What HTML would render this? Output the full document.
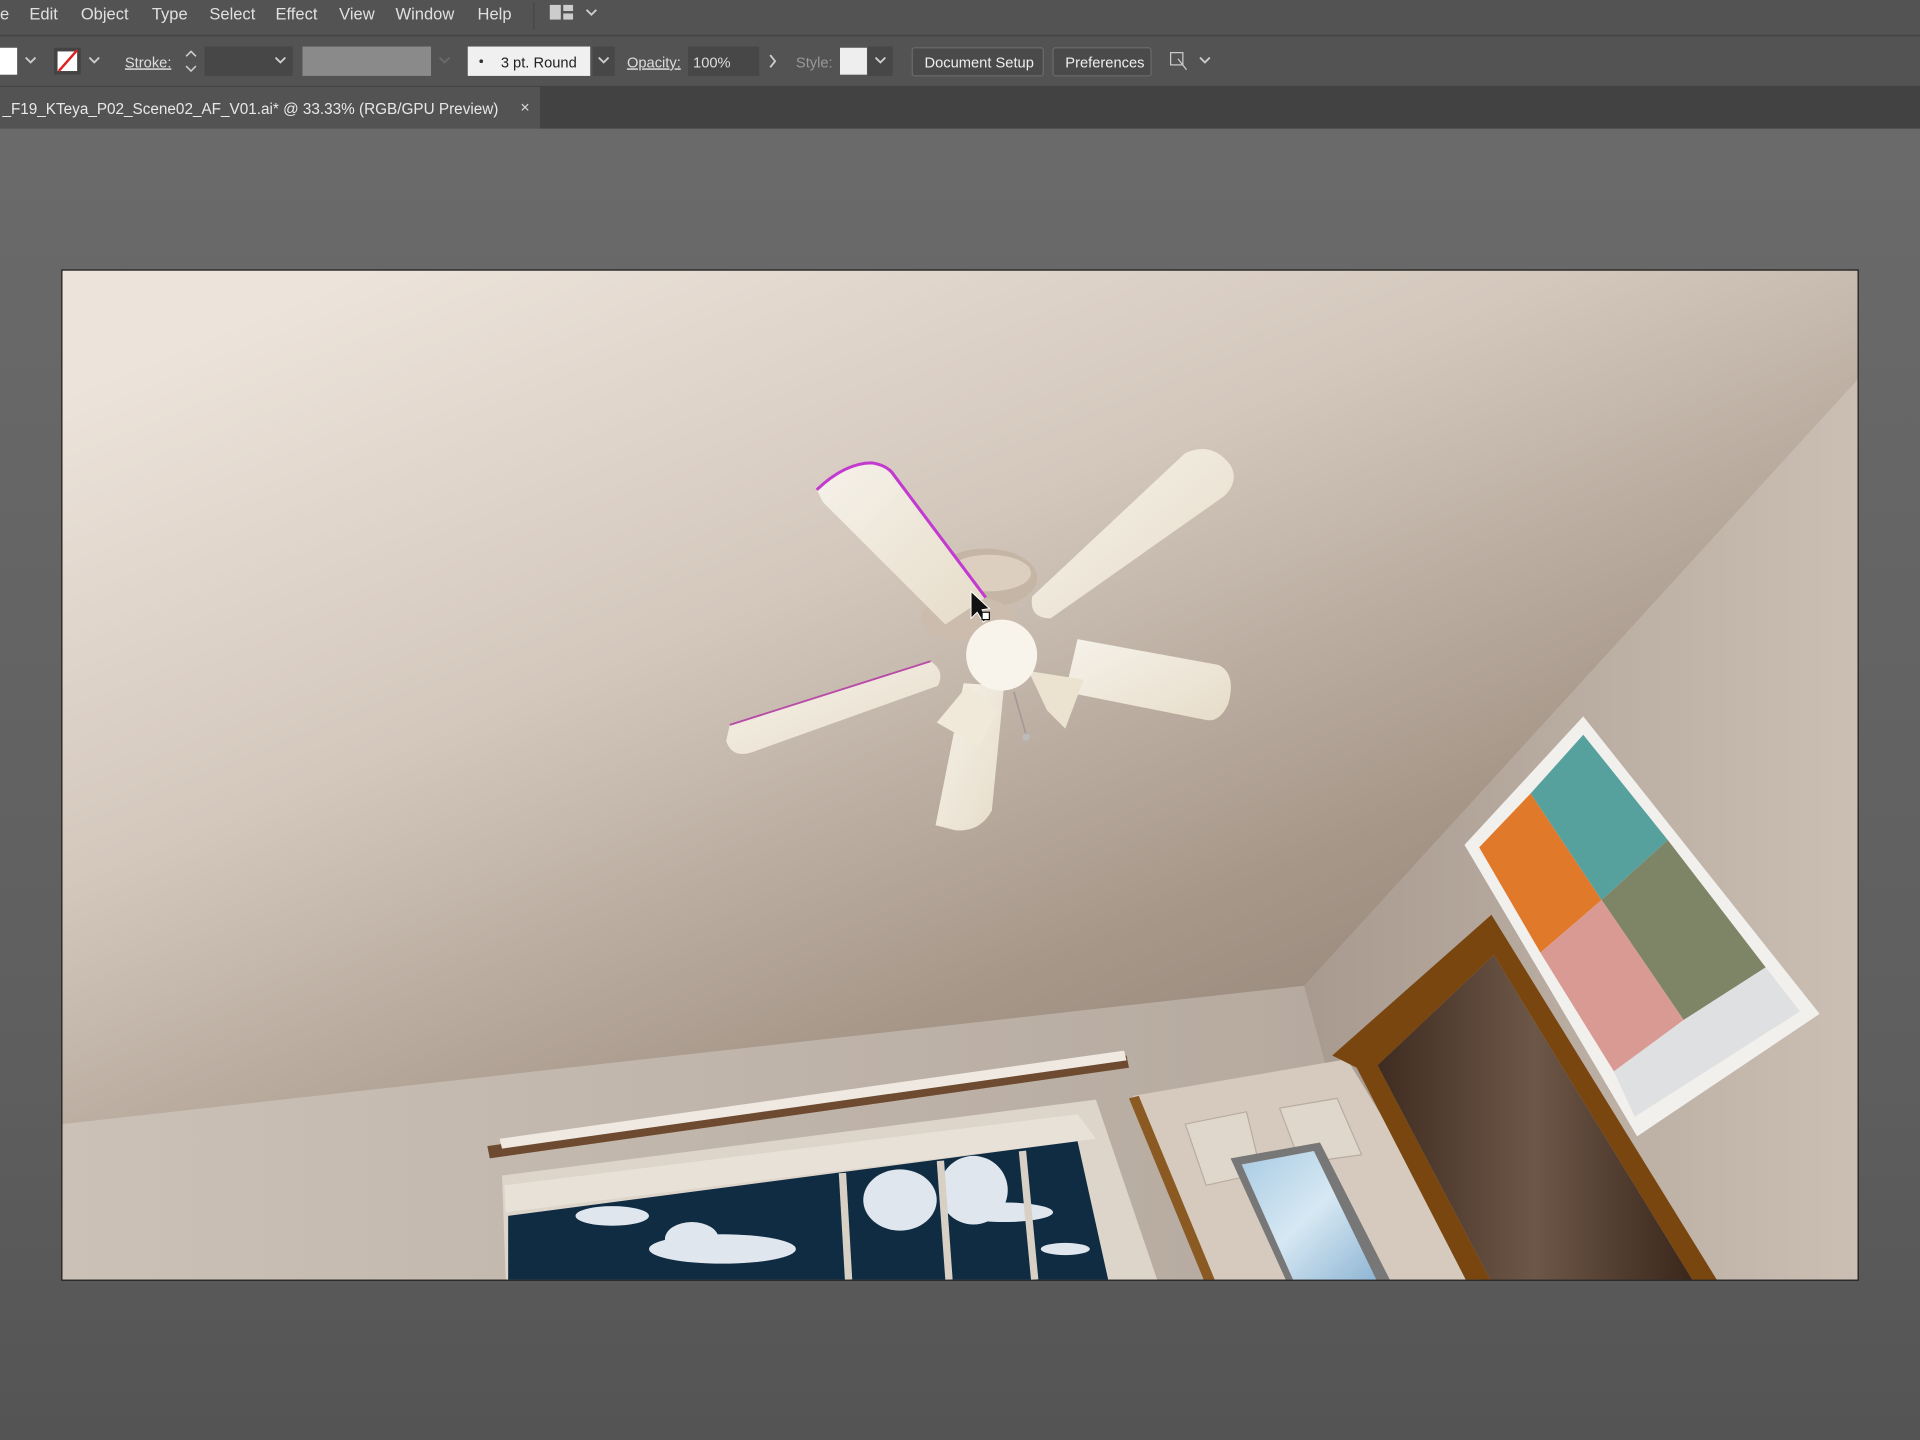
<!DOCTYPE html>
<html><head><meta charset="utf-8"><style>
html,body{margin:0;padding:0;background:#5a5a5a;overflow:hidden}
svg{display:block}
text{font-family:"Liberation Sans",sans-serif}
</style></head><body>
<svg width="1920" height="1440" viewBox="0 0 1568 1176" xmlns="http://www.w3.org/2000/svg">
<defs>
<linearGradient id="cv" x1="0" y1="0" x2="0" y2="1">
<stop offset="0" stop-color="#6c6c6c"/><stop offset="0.75" stop-color="#5e5e5e"/><stop offset="1" stop-color="#545454"/></linearGradient>
<linearGradient id="ceil" x1="0.1" y1="0.05" x2="0.75" y2="0.95">
<stop offset="0" stop-color="#ece3da"/><stop offset="0.35" stop-color="#d4c8bd"/><stop offset="0.7" stop-color="#a69789"/><stop offset="1" stop-color="#8a7b70"/></linearGradient>
<linearGradient id="rw" x1="0" y1="0" x2="1" y2="0">
<stop offset="0" stop-color="#a89a8f"/><stop offset="1" stop-color="#cbbfb4"/></linearGradient>
<linearGradient id="bw" x1="0" y1="0" x2="1" y2="0">
<stop offset="0" stop-color="#cbc1b7"/><stop offset="1" stop-color="#b5a99e"/></linearGradient>
<linearGradient id="dr" x1="0" y1="0" x2="1" y2="0">
<stop offset="0" stop-color="#3f2c20"/><stop offset="0.5" stop-color="#6d5748"/><stop offset="1" stop-color="#3a271b"/></linearGradient>
<linearGradient id="bl" x1="0" y1="0" x2="1" y2="1">
<stop offset="0" stop-color="#f6f2ea"/><stop offset="1" stop-color="#e6dcc9"/></linearGradient>
<linearGradient id="mir" x1="0" y1="0" x2="1" y2="1">
<stop offset="0" stop-color="#a9cbe3"/><stop offset="0.5" stop-color="#d6e8f3"/><stop offset="1" stop-color="#8fb6d4"/></linearGradient>
<clipPath id="ab"><rect x="51" y="221" width="1466" height="824"/></clipPath>
</defs>
<!-- chrome -->
<rect width="1568" height="1176" fill="url(#cv)"/>
<rect width="1568" height="28" fill="#535353"/>
<rect y="28" width="1568" height="42" fill="#535353"/>
<line x1="0" y1="29" x2="1568" y2="29" stroke="#444" stroke-width="1.5"/>
<rect y="70" width="1568" height="35" fill="#424242"/>
<rect y="71" width="441" height="34" fill="#535353"/>
<g fill="#e0e0e0" font-size="13.5">
<text x="0" y="16">e</text><text x="24" y="16">Edit</text><text x="66" y="16">Object</text><text x="124" y="16">Type</text><text x="171" y="16">Select</text><text x="225" y="16">Effect</text><text x="277" y="16">View</text><text x="323" y="16">Window</text><text x="390" y="16">Help</text>
</g>
<line x1="436" y1="2" x2="436" y2="24" stroke="#444"/>
<rect x="449" y="4" width="9" height="12" fill="#ccc"/><rect x="460" y="4" width="8" height="5" fill="#ccc"/><rect x="460" y="11" width="8" height="5" fill="#ccc"/>
<path d="M479 8l4 4 4-4" stroke="#ccc" fill="none" stroke-width="1.5"/>
<!-- toolbar -->
<rect x="0" y="39" width="14" height="22" fill="#fff"/>
<path d="M21 47l4 4 4-4" stroke="#ccc" fill="none" stroke-width="1.5"/>
<rect x="44" y="39" width="22" height="22" fill="#444"/><rect x="47" y="42" width="16" height="16" fill="#fff"/><line x1="48" y1="58" x2="63" y2="41" stroke="#e02020" stroke-width="2"/>
<path d="M73 47l4 4 4-4" stroke="#ccc" fill="none" stroke-width="1.5"/>
<text x="102" y="55" fill="#ddd" font-size="12" text-decoration="underline">Stroke:</text>
<path d="M152 46l4-4 4 4M152 54l4 4 4-4" stroke="#ccc" fill="none" stroke-width="1.3"/>
<rect x="167" y="38" width="72" height="24" fill="#474747"/>
<path d="M225 47l4 4 4-4" stroke="#ccc" fill="none" stroke-width="1.5"/>
<rect x="247" y="38" width="105" height="24" fill="#8a8a8a"/>
<path d="M359 47l4 4 4-4" stroke="#6a6a6a" fill="none" stroke-width="1.5"/>
<rect x="382" y="38" width="100" height="24" fill="#f0f0f0"/>
<circle cx="393" cy="50" r="1.5" fill="#333"/><text x="409" y="55" fill="#222" font-size="12">3 pt. Round</text>
<rect x="484" y="38" width="18" height="24" fill="#474747"/><path d="M489 47l4 4 4-4" stroke="#ccc" fill="none" stroke-width="1.5"/>
<text x="512" y="55" fill="#ddd" font-size="12" text-decoration="underline">Opacity:</text>
<rect x="562" y="38" width="58" height="24" fill="#474747"/><text x="566" y="55" fill="#ddd" font-size="12">100%</text>
<path d="M629 45l4 5-4 5" stroke="#ccc" fill="none" stroke-width="1.5"/>
<text x="650" y="55" fill="#999" font-size="12">Style:</text>
<rect x="686" y="39" width="22" height="22" fill="#eee"/><rect x="709" y="38" width="20" height="24" fill="#474747"/><path d="M715 47l4 4 4-4" stroke="#ccc" fill="none" stroke-width="1.5"/>
<rect x="745" y="39" width="107" height="23" fill="#4a4a4a" stroke="#6a6a6a" rx="2"/><text x="755" y="55" fill="#eee" font-size="12">Document Setup</text>
<rect x="860" y="39" width="80" height="23" fill="#4a4a4a" stroke="#6a6a6a" rx="2"/><text x="870" y="55" fill="#eee" font-size="12">Preferences</text>
<rect x="956" y="43" width="10" height="10" fill="none" stroke="#ccc"/><path d="M962 48l7 9" stroke="#ccc"/>
<path d="M980 47l4 4 4-4" stroke="#ccc" fill="none" stroke-width="1.5"/>
<text x="2" y="93" fill="#e8e8e8" font-size="12.5">_F19_KTeya_P02_Scene02_AF_V01.ai* @ 33.33% (RGB/GPU Preview)</text>
<text x="425" y="92" fill="#ddd" font-size="13">×</text>
<!-- artboard -->
<rect x="50" y="220" width="1468" height="826" fill="#222"/>
<g clip-path="url(#ab)">
<rect x="51" y="221" width="1466" height="824" fill="url(#ceil)"/>
<polygon points="51,918 1065,805 1110,870 1130,1045 51,1045" fill="url(#bw)"/>
<polygon points="1065,805 1517,310 1517,1045 1130,1045" fill="url(#rw)"/>
<!-- curtain rod -->
<polygon points="398,936 920,862 922,872 400,946" fill="#6d4a30"/>
<polygon points="408,930 918,858 920,866 410,938" fill="#efe9e2"/>
<!-- window -->
<polygon points="410,960 895,898 945,1045 413,1045" fill="#ddd4ca"/>
<polygon points="412,968 880,910 895,930 413,990" fill="#e8e1d8"/>
<polygon points="415,993 880,932 905,1045 415,1045" fill="#0f2c42"/>
<g fill="#dfe6ee">
<ellipse cx="590" cy="1020" rx="60" ry="12"/><ellipse cx="565" cy="1012" rx="22" ry="14"/><ellipse cx="500" cy="993" rx="30" ry="8"/>
<ellipse cx="735" cy="980" rx="30" ry="25"/><ellipse cx="795" cy="972" rx="28" ry="28"/><ellipse cx="820" cy="990" rx="40" ry="8"/><ellipse cx="870" cy="1020" rx="20" ry="5"/>
</g>
<g stroke="#d8cfc5" stroke-width="6"><line x1="688" y1="958" x2="693" y2="1045"/><line x1="768" y1="948" x2="775" y2="1045"/><line x1="835" y1="940" x2="845" y2="1045"/></g>
<!-- cabinet door -->
<polygon points="925,895 1100,865 1210,1045 985,1045" fill="#d5cabd"/>
<polygon points="922,897 930,895 992,1045 983,1045" fill="#8a5a22"/>
<polygon points="968,918 1018,908 1030,958 985,968" fill="#e0d7cc" stroke="#b8ad9f"/>
<polygon points="1045,905 1092,897 1112,943 1062,950" fill="#e0d7cc" stroke="#b8ad9f"/>
<polygon points="1005,946 1078,933 1135,1045 1050,1045" fill="#777"/>
<polygon points="1014,951 1073,940 1124,1045 1056,1045" fill="url(#mir)"/>
<!-- doorway -->
<polygon points="1088,862 1218,747 1402,1045 1382,1045 1220,780 1125,870 1217,1045 1197,1045 1108,872" fill="#7a4610"/>
<polygon points="1125,870 1220,780 1382,1045 1217,1045" fill="url(#dr)"/>
<!-- painting -->
<polygon points="1196,690 1293,585 1486,828 1337,928" fill="#f2f0ec"/>
<polygon points="1208,692 1250,648 1308,735 1258,778" fill="#e07a2a"/>
<polygon points="1250,648 1293,600 1362,686 1308,735" fill="#56a09d"/>
<polygon points="1308,735 1362,686 1442,790 1375,833" fill="#7e8566"/>
<polygon points="1258,778 1308,735 1375,833 1318,875" fill="#d99a94"/>
<polygon points="1318,875 1375,833 1442,790 1470,826 1335,912" fill="#dfe0e2"/>
<!-- fan -->
<ellipse cx="805" cy="472" rx="42" ry="24" fill="#c5b5a5"/>
<ellipse cx="808" cy="468" rx="34" ry="15" fill="#dccfc0"/>
<ellipse cx="790" cy="505" rx="38" ry="18" fill="#cbbcad"/>
<path d="M667 400 Q690 378 712 378 Q725 380 730 388 L805 488 L772 510 L672 410 Z" fill="url(#bl)"/>
<path d="M667 400 Q690 378 712 378 Q725 380 730 388 L805 488" fill="none" stroke="#c23ad0" stroke-width="2.5"/>
<path d="M843 487 L968 370 Q990 360 1005 380 Q1012 393 1000 405 L858 505 Q840 505 843 487 Z" fill="url(#bl)"/>
<path d="M596 592 L760 540 Q772 548 766 560 L615 614 Q598 620 593 605 Z" fill="url(#bl)"/>
<path d="M596 592 L760 540" fill="none" stroke="#b84aa8" stroke-width="1.5"/>
<path d="M880 522 L995 543 Q1010 550 1003 575 Q996 590 985 588 L870 565 Z" fill="url(#bl)"/>
<path d="M787 558 L820 560 L810 662 Q800 680 780 678 L764 674 Z" fill="url(#bl)"/>
<path d="M765 590 L790 560 L815 580 L800 610 Z" fill="#f0e8d8"/>
<path d="M840 548 L885 555 L870 595 L855 580 Z" fill="#ebe2d0"/>
<circle cx="818" cy="535" r="29" fill="#f8f4ec"/>
<line x1="828" y1="565" x2="838" y2="600" stroke="#a99" stroke-width="1.5"/><circle cx="838" cy="602" r="3" fill="#bbb"/>
<path d="M793 483 L793 505 L798 500 L803 508 L806 506 L802 498 L808 497 Z" fill="#111" stroke="#fff" stroke-width="0.8"/>
<rect x="802" y="500" width="6" height="6" fill="#fff" stroke="#111"/>
</g>
</svg>
</body></html>
